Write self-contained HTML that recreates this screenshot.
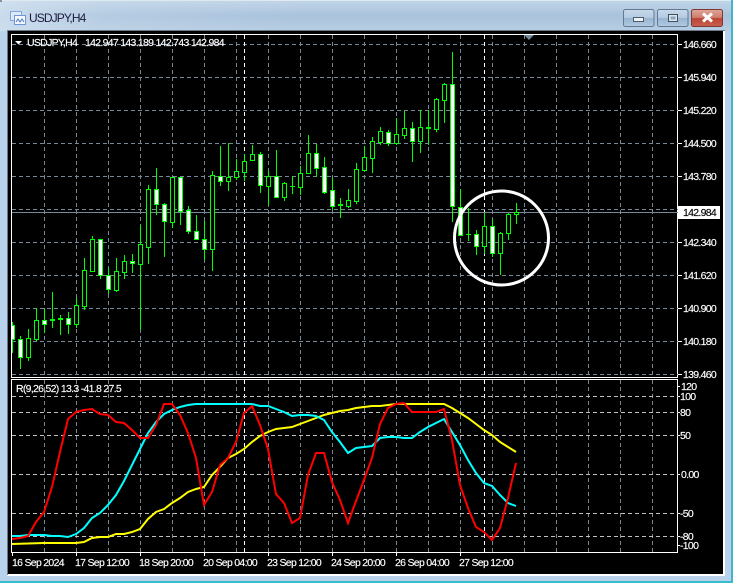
<!DOCTYPE html>
<html><head><meta charset="utf-8"><title>USDJPY,H4</title>
<style>
html,body{margin:0;padding:0;width:735px;height:583px;overflow:hidden;background:#b8d2ec}
svg{display:block;position:absolute;left:0;top:0}
text{font-family:"Liberation Sans",sans-serif;font-size:10.5px;fill:#fff;stroke:#fff;stroke-width:.15px;letter-spacing:-.7px}
</style></head><body>
<svg width="735" height="583" viewBox="0 0 735 583" xmlns="http://www.w3.org/2000/svg">
<defs>
<linearGradient id="tb" x1="0" y1="0" x2="0" y2="1"><stop offset="0" stop-color="#c3d6e8"/><stop offset=".5" stop-color="#a9c3dd"/><stop offset="1" stop-color="#b7cde2"/></linearGradient>
<linearGradient id="tl" x1="0" y1="0" x2="1" y2="0"><stop offset="0" stop-color="#d4e3f0" stop-opacity=".75"/><stop offset=".35" stop-color="#d4e3f0" stop-opacity=".25"/><stop offset="1" stop-color="#d4e3f0" stop-opacity="0"/></linearGradient>
<linearGradient id="b1" x1="0" y1="0" x2="0" y2="1"><stop offset="0" stop-color="#c8d9ea"/><stop offset=".48" stop-color="#b4cbe2"/><stop offset=".52" stop-color="#98b4d0"/><stop offset="1" stop-color="#b3cbe3"/></linearGradient>
<linearGradient id="b2" x1="0" y1="0" x2="0" y2="1"><stop offset="0" stop-color="#dfa598"/><stop offset=".48" stop-color="#cf7d6d"/><stop offset=".52" stop-color="#bb4434"/><stop offset="1" stop-color="#c8604f"/></linearGradient>
<clipPath id="main"><rect x="12" y="35" width="666" height="343"/></clipPath>
</defs>
<!-- window frame -->
<rect width="735" height="583" fill="#b8d2ec"/>
<rect width="735" height="31" fill="url(#tb)"/>
<rect width="300" height="31" fill="url(#tl)"/>
<rect x="0" y="0" width="735" height="1" fill="#dfe9f2"/>
<rect x="731" y="0" width="2" height="583" fill="#3fb6c9"/>
<rect x="733" y="0" width="2" height="583" fill="#fff"/>
<rect x="0" y="581" width="733" height="2" fill="#39bccb"/>
<rect x="0" y="0" width="2" height="2" fill="#8b8f94"/>
<rect x="7" y="30" width="718" height="546" fill="#fff"/>
<rect x="7" y="30" width="718" height="1" fill="#6d7884"/>
<rect x="7" y="30" width="1" height="545" fill="#6d7884"/>
<rect x="8" y="31" width="715" height="543" fill="#000"/>
<!-- icon -->
<g shape-rendering="crispEdges">
<rect x="10.500" y="11.500" width="11" height="9" fill="#dfe9f6" stroke="#7ea7dd"/>
<rect x="14.500" y="15.500" width="11" height="9" fill="#f4f8fd" stroke="#6d97d6"/>
</g>
<path d="M16 22l2-3 2 3 2-3 2 3" fill="none" stroke="#4a76c0" stroke-width="1"/>
<text x="29" y="22" style="font-size:12px;letter-spacing:-.9px;fill:#1d1a3e;stroke:none">USDJPY,H4</text>
<!-- buttons -->
<rect x="623.500" y="9.500" width="30.500" height="17" rx="2" fill="url(#b1)" stroke="#62798f"/>
<rect x="657.500" y="9.500" width="30.500" height="17" rx="2" fill="url(#b1)" stroke="#62798f"/>
<rect x="691.500" y="9.500" width="31" height="17" rx="2" fill="url(#b2)" stroke="#7c3a33"/>
<rect x="633.500" y="17.500" width="10" height="4" fill="#eef3f7" stroke="#4c5c6c"/>
<rect x="668.500" y="14.500" width="9" height="7" fill="#dce6ef" stroke="#3f4f5f"/>
<rect x="670.500" y="16.500" width="5" height="3" fill="#8da6bd"/>
<path d="M703 13.500l9 8M712 13.500l-9 8" stroke="#fff" stroke-width="3" fill="none"/>
<!-- panels -->
<g shape-rendering="crispEdges">
<path d="M11.500 34.500H677.500V377.500H11.500ZM11.500 379.500H677.500V552.500H11.500Z" fill="none" stroke="#fff"/>
<!-- main grid -->
<path d="M12 44.500H678M12 77.500H678M12 110.500H678M12 143.500H678M12 176.500H678M12 209.500H678M12 242.500H678M12 275.500H678M12 308.500H678M12 341.500H678M12 374.500H678" stroke="#778899" stroke-dasharray="4 3" fill="none"/>
<path d="M44.500 35V378M76.500 35V378M108.500 35V378M140.500 35V378M172.500 35V378M204.500 35V378M236.500 35V378M268.500 35V378M300.500 35V378M332.500 35V378M364.500 35V378M396.500 35V378M428.500 35V378M460.500 35V378M492.500 35V378M524.500 35V378M556.500 35V378M588.500 35V378M620.500 35V378M652.500 35V378M44.500 380V552M76.500 380V552M108.500 380V552M140.500 380V552M172.500 380V552M204.500 380V552M236.500 380V552M268.500 380V552M300.500 380V552M332.500 380V552M364.500 380V552M396.500 380V552M428.500 380V552M460.500 380V552M492.500 380V552M524.500 380V552M556.500 380V552M588.500 380V552M620.500 380V552M652.500 380V552" stroke="#778899" stroke-dasharray="4 3" fill="none"/>
<path d="M244.500 35V378M484.500 35V378M244.500 380V552M484.500 380V552" stroke="#fff" stroke-dasharray="4 3" fill="none"/>
<path d="M12 396.500H678M12 412.500H678M12 435.500H678M12 474.500H678M12 513.500H678M12 536.500H678" stroke="#c0c0c0" stroke-dasharray="4 3" fill="none"/>
<rect x="12" y="212" width="666" height="1" fill="#778899"/>
<!-- ticks -->
<path d="M678 44.500h4M678 77.500h4M678 110.500h4M678 143.500h4M678 176.500h4M678 209.500h4M678 242.500h4M678 275.500h4M678 308.500h4M678 341.500h4M678 374.500h4M678 386.500h2M678 396.500h2M678 412.500h2M678 435.500h2M678 474.500h2M678 513.500h2M678 536.500h2M678 545.500h2M12.500 553v3M76.500 553v3M140.500 553v3M204.500 553v3M268.500 553v3M332.500 553v3M396.500 553v3M460.500 553v3" stroke="#fff" fill="none"/>
<g clip-path="url(#main)">
<!-- wicks -->
<path fill="none" stroke="#00ff00" d="M12.500 322V353M20.500 336V369M28.500 329V361M36.500 308V341M44.500 309V333M52.500 292V328M60.500 315V335M68.500 312V334M76.500 298V328M84.500 258V310M92.500 236V271M100.500 239V279M108.500 268V294M116.500 258V292M124.500 255V279M132.500 254V273M140.500 225V330M148.500 185V264M156.500 168V215M164.500 203V257M172.500 177V228M180.500 177V225M188.500 206V234M196.500 215V240M204.500 221V260M212.500 171V271M220.500 146V186M228.500 143V191M236.500 159V180M244.500 154V181M252.500 145V161M260.500 152V193M268.500 171V205M276.500 150V198M284.500 182V201M292.500 176V194M300.500 166V195M308.500 135V173M316.500 144V177M324.500 157V194M332.500 178V210M340.500 198V218M348.500 189V208M356.500 163V204M364.500 146V171M372.500 137V173M380.500 127V145M388.500 130V146M396.500 118V145M404.500 111V139M412.500 122V162M420.500 110V153M428.500 110V145M436.500 98V132M444.500 83V123M452.500 52V222M460.500 189V236M468.500 208V241M476.500 230V255M484.500 213V254M492.500 219V257M500.500 232V275M508.500 213V240M516.500 203V224"/>
<!-- hollow bodies -->
<path fill="#000" stroke="#00ff00" d="M26.500 338.500h4v19h-4zM34.500 320.500h4v19h-4zM74.500 305.500h4v19h-4zM82.500 270.500h4v36h-4zM90.500 239.500h4v32h-4zM114.500 271.500h4v19h-4zM122.500 261.500h4v11h-4zM138.500 244.500h4v20h-4zM146.500 189.500h4v58h-4zM170.500 177.500h4v45h-4zM210.500 175.500h4v74h-4zM226.500 177.500h4v4h-4zM234.500 171.500h4v6h-4zM242.500 161.500h4v11h-4zM250.500 154.500h4v6h-4zM266.500 176.500h4v10h-4zM282.500 183.500h4v14h-4zM298.500 173.500h4v14h-4zM306.500 153.500h4v20h-4zM346.500 200.500h4v6h-4zM354.500 169.500h4v32h-4zM362.500 157.500h4v13h-4zM370.500 141.500h4v17h-4zM378.500 131.500h4v11h-4zM394.500 134.500h4v9h-4zM402.500 128.500h4v7h-4zM418.500 127.500h4v14h-4zM434.500 99.500h4v30h-4zM442.500 84.500h4v16h-4zM482.500 226.500h4v20h-4zM498.500 233.500h4v20h-4zM506.500 214.500h4v19h-4zM514.500 212.500h4v2h-4z"/>
<!-- filled bodies -->
<path fill="#fff" stroke="#00ff00" d="M10.500 325.500h4v14h-4zM18.500 339.500h4v18h-4zM42.500 320.500h4v4h-4zM66.500 318.500h4v6h-4zM98.500 239.500h4v36h-4zM106.500 275.500h4v14h-4zM130.500 261.500h4v2h-4zM154.500 189.500h4v15h-4zM162.500 204.500h4v17h-4zM178.500 177.500h4v34h-4zM186.500 210.500h4v21h-4zM194.500 231.500h4v8h-4zM202.500 239.500h4v10h-4zM218.500 176.500h4v5h-4zM258.500 154.500h4v31h-4zM274.500 176.500h4v21h-4zM314.500 153.500h4v15h-4zM322.500 167.500h4v25h-4zM330.500 190.500h4v16h-4zM386.500 132.500h4v11h-4zM410.500 128.500h4v13h-4zM450.500 84.500h4v122h-4zM458.500 207.500h4v28h-4zM474.500 234.500h4v12h-4zM490.500 226.500h4v27h-4z"/>
<!-- doji -->
<path fill="#00ff00" d="M50 319h5v2h-5zM58 318h5v2h-5zM290 186h5v1h-5zM338 204h5v2h-5zM426 127h5v2h-5zM466 234h5v1h-5z"/>
</g>
</g>
<!-- oscillator lines -->
<polyline fill="none" stroke="#ffff00" stroke-width="2" points="12,544 44,543 76,543 84,542 92,538 100,537 108,537 116,534 124,534 132,532 140,529 148,519 156,512 164,509 172,503 180,498 188,492 196,489 204,487 212,475 220,467 228,458 236,454 244,449 252,442 260,436 268,432 276,429 284,428 292,427 300,424 308,421 316,418 324,415 332,413 340,411 348,410 356,408 364,407 372,406 380,406 388,405 396,404 444,404 452,408 460,413 468,418 476,424 484,430 492,435 500,442 508,447 516,452"/>
<polyline fill="none" stroke="#00ffff" stroke-width="2" points="12,536 20,536 28,535 36,535 44,535 52,536 60,536 68,537 76,534 84,528 92,518 100,513 108,505 116,495 124,481 132,465 140,449 148,433 156,422 164,414 172,410 180,407 188,405 196,404 252,404 260,406 268,406 276,409 284,412 292,416 300,415 308,415 316,416 324,420 332,432 340,442 348,453 356,448 364,447 372,446 380,438 388,437 396,437 404,438 412,438 420,432 428,427 436,423 444,419 452,432 460,445 468,460 476,473 484,483 492,486 500,495 508,503 516,506"/>
<polyline fill="none" stroke="#ff0000" stroke-width="2" points="12,539 20,538 28,536 36,522 44,512 52,487 60,452 68,419 76,412 84,410 92,409 100,414 108,415 116,422 124,423 132,430 140,438 148,438 156,425 164,404 172,404 180,415 188,433 196,458 204,505 212,492 220,465 228,458 236,442 244,413 252,406 260,425 268,449 276,494 284,503 292,523 300,518 308,475 316,453 324,453 332,482 340,500 348,523 356,501 364,480 372,458 380,424 388,408 396,404 404,403 412,412 420,412 428,412 436,412 444,409 452,440 460,485 468,508 476,527 484,532 492,540 500,528 508,498 516,463"/>
<!-- circle -->
<circle cx="501.500" cy="238" r="47" fill="none" stroke="#fff" stroke-width="3"/>
<!-- header -->
<path d="M15 41h7l-3.500 3.500z" fill="#fff"/>
<path d="M524 35h10l-5 5z" fill="#778899"/>
<text x="27" y="46">USDJPY,H4</text>
<text x="85" y="46">142.947 143.189 142.743 142.984</text>
<text x="16" y="392">R(9,26,52) 13.3 -41.8 27.5</text>
<!-- price axis -->
<text x="683" y="48">146.660</text>
<text x="683" y="81">145.940</text>
<text x="683" y="114">145.220</text>
<text x="683" y="147">144.500</text>
<text x="683" y="180">143.780</text>
<rect x="678" y="206" width="42" height="13" fill="#fff"/>
<text x="683" y="216" style="fill:#000;stroke:#000">142.984</text>
<text x="683" y="246">142.340</text>
<text x="683" y="279">141.620</text>
<text x="683" y="312">140.900</text>
<text x="683" y="345">140.180</text>
<text x="683" y="378">139.460</text>
<text x="681" y="390">120</text>
<text x="680" y="400">100</text>
<text x="680" y="416">80</text>
<text x="680" y="439">50</text>
<text x="681" y="478">0.00</text>
<text x="680" y="517">-50</text>
<text x="680" y="540">-80</text>
<text x="680" y="549">-100</text>
<!-- time axis -->
<text x="12" y="566">16 Sep 2024</text>
<text x="75" y="566">17 Sep 12:00</text>
<text x="139" y="566">18 Sep 20:00</text>
<text x="203" y="566">20 Sep 04:00</text>
<text x="267" y="566">23 Sep 12:00</text>
<text x="331" y="566">24 Sep 20:00</text>
<text x="395" y="566">26 Sep 04:00</text>
<text x="459" y="566">27 Sep 12:00</text>
</svg>
</body></html>
